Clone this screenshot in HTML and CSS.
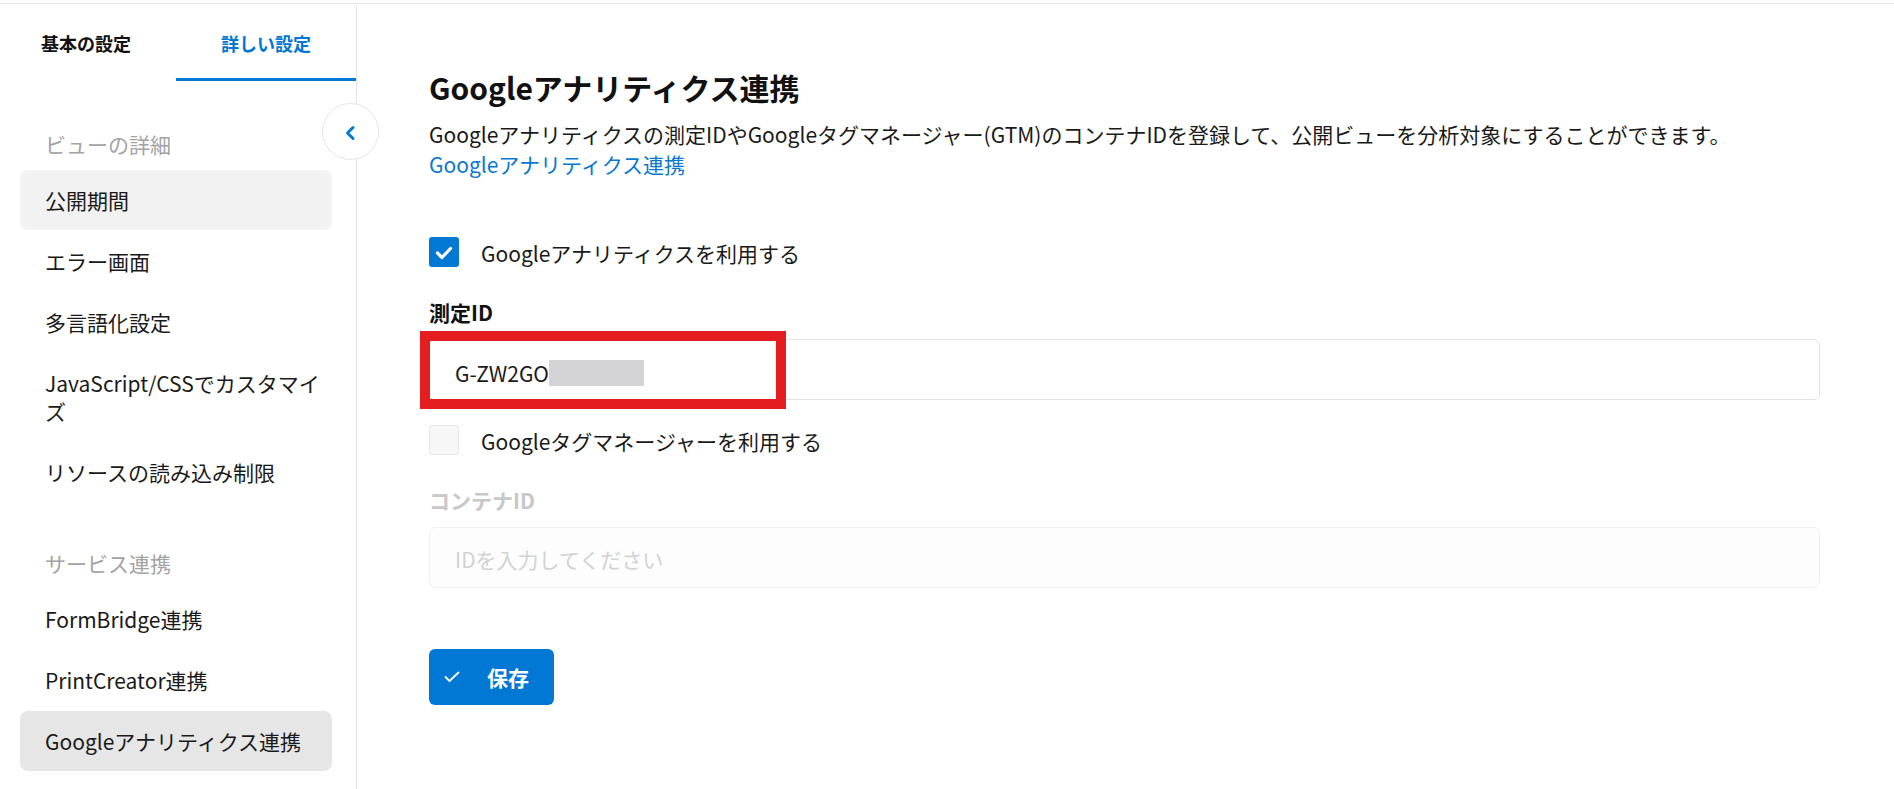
FILE: index.html
```html
<!DOCTYPE html>
<html lang="ja">
<head>
<meta charset="utf-8">
<title>Googleアナリティクス連携</title>
<link rel="stylesheet" href="styles.css">
</head>
<body>
<div class="topbar"></div>
<div class="layout">
  <aside class="sidebar">
    <div class="tabs">
      <div class="tab tab-basic">基本の設定</div>
      <div class="tab tab-detail active">詳しい設定</div>
    </div>
    <button class="collapse" type="button" aria-label="閉じる">
      <svg width="12" height="16" viewBox="0 0 12 16"><path d="M9 2.5 L3.5 8 L9 13.5" fill="none" stroke="#0078d4" stroke-width="3" stroke-linecap="round" stroke-linejoin="round"/></svg>
    </button>
    <nav class="nav">
      <div class="nav-header first">ビューの詳細</div>
      <div class="nav-item hover">公開期間</div>
      <div class="nav-item">エラー画面</div>
      <div class="nav-item">多言語化設定</div>
      <div class="nav-item">JavaScript/CSSでカスタマイズ</div>
      <div class="nav-item">リソースの読み込み制限</div>
      <div class="nav-header">サービス連携</div>
      <div class="nav-item">FormBridge連携</div>
      <div class="nav-item">PrintCreator連携</div>
      <div class="nav-item active">Googleアナリティクス連携</div>
    </nav>
  </aside>
  <main class="main">
    <h1 class="title">Googleアナリティクス連携</h1>
    <p class="desc">Googleアナリティクスの測定IDやGoogleタグマネージャー(GTM)のコンテナIDを登録して、公開ビューを分析対象にすることができます。<br><a class="link" href="#">Googleアナリティクス連携</a></p>

    <label class="check-row first-check">
      <span class="checkbox checked">
        <svg width="30" height="30" viewBox="0 0 30 30"><path d="M8.5 16 L13 20.5 L21.5 11.5" fill="none" stroke="#fff" stroke-width="3.2" stroke-linecap="round" stroke-linejoin="round"/></svg>
      </span>
      <span class="check-label">Googleアナリティクスを利用する</span>
    </label>

    <div class="field-label">測定ID</div>
    <div class="input-wrap">
      <div class="input"><span class="value">G-ZW2GO</span><span class="redact"></span></div>
      <div class="highlight"></div>
    </div>

    <label class="check-row second-check">
      <span class="checkbox unchecked"></span>
      <span class="check-label">Googleタグマネージャーを利用する</span>
    </label>

    <div class="field-label disabled">コンテナID</div>
    <div class="input disabled"><span class="placeholder">IDを入力してください</span></div>

    <button class="save" type="button">
      <svg width="16" height="12" viewBox="0 0 16 12"><path d="M1.5 6 L5.5 10 L14.5 1.5" fill="none" stroke="#fff" stroke-width="1.8" stroke-linecap="round" stroke-linejoin="round"/></svg>
      <span>保存</span>
    </button>
  </main>
</div>
</body>
</html>
```

FILE: styles.css
```css
* { box-sizing: border-box; }

html, body {
  margin: 0;
  padding: 0;
  background: #fff;
}

body {
  font-family: "Noto Sans CJK JP", "Noto Sans", sans-serif;
  color: #1a1a1a;
  font-size: 21px;
}

.topbar {
  height: 4px;
  border-bottom: 1px solid #e8e8e8;
}

.layout {
  display: flex;
  min-height: calc(100vh - 4px);
}

.sidebar {
  position: relative;
  width: 357px;
  flex: 0 0 357px;
  border-right: 1px solid #e6e6e6;
}

.tabs {
  display: flex;
}

.tab {
  height: 77px;
  display: flex;
  align-items: center;
  justify-content: center;
  font-size: 18px;
  font-weight: 700;
  color: #111;
  border-bottom: 3px solid transparent;
  padding-top: 3px;
}

.tab-basic { width: 172px; }
.tab-detail { flex: 1; margin-left: 4px; }

.tab.active {
  color: #0078d4;
  border-bottom-color: #0078d4;
}

.collapse {
  position: absolute;
  left: 322px;
  top: 99px;
  width: 57px;
  height: 57px;
  border-radius: 50%;
  border: 1px solid #e6e6e6;
  background: #fff;
  display: flex;
  align-items: center;
  justify-content: center;
  padding: 0;
  padding-top: 3px;
  padding-right: 2px;
  cursor: pointer;
}

.nav {
  padding: 0 24px 0 20px;
}

.nav-header {
  padding: 0 25px 12px;
  line-height: 28px;
  color: #a3a3a3;
  margin-top: 47px;
}

.nav-header.first {
  margin-top: 49px;
}

.nav-item {
  padding: 16px 10px 16px 25px;
  line-height: 28px;
  border-radius: 8px;
  margin-bottom: 1px;
  color: #1a1a1a;
}

.nav-item.hover { background: #f2f2f2; }
.nav-item.active { background: #e6e6e6; }

.main {
  flex: 1;
  padding: 63px 74px 0 72px;
}

.title {
  margin: 0;
  font-size: 30px;
  font-weight: 700;
  line-height: 40px;
  color: #111;
}

.desc {
  margin: 12px 0 0;
  line-height: 30px;
  color: #1a1a1a;
}

.link {
  color: #0a78d2;
  text-decoration: none;
}

.check-row {
  display: flex;
  align-items: center;
  gap: 22px;
}

.first-check { margin-top: 58px; }
.second-check { margin-top: 25px; }

.checkbox {
  width: 30px;
  height: 30px;
  border-radius: 3px;
  flex: 0 0 30px;
  display: block;
}

.checkbox svg { display: block; }

.checkbox.checked { background: #0078d4; }

.checkbox.unchecked {
  background: #f7f7f7;
  border: 1px solid #e8e8e8;
}

.check-label {
  line-height: 28px;
  color: #1a1a1a;
  padding-top: 1px;
}

.field-label {
  margin-top: 31px;
  font-weight: 700;
  line-height: 28px;
  color: #111;
}

.field-label.disabled { color: #c8c8c8; }

.input-wrap {
  position: relative;
  margin-top: 13px;
}

.input {
  height: 61px;
  border: 1px solid #e3e3e3;
  border-radius: 6px;
  padding: 0 25px;
  display: flex;
  align-items: center;
  background: #fff;
}

.input .value {
  color: #1a1a1a;
  padding-top: 6px;
  line-height: 28px;
}

.redact {
  display: inline-block;
  width: 95px;
  height: 26px;
  background: #d4d4d6;
  margin-top: 6px;
}

.highlight {
  position: absolute;
  left: -9px;
  top: -8px;
  width: 366px;
  height: 78px;
  border: 10px solid #e41e20;
  pointer-events: none;
}

.input.disabled {
  margin-top: 13px;
  border-color: #f1f1f1;
  background: #fdfdfd;
}

.placeholder {
  color: #d2d2d2;
  line-height: 28px;
  padding-top: 2px;
}

.save {
  margin-top: 61px;
  width: 125px;
  height: 56px;
  border: 0;
  border-radius: 6px;
  background: #0078d4;
  color: #fff;
  font-family: inherit;
  font-size: 21px;
  font-weight: 700;
  display: flex;
  align-items: center;
  padding: 0 0 0 15px;
  gap: 27px;
  cursor: pointer;
}

.save svg { display: block; }
```
